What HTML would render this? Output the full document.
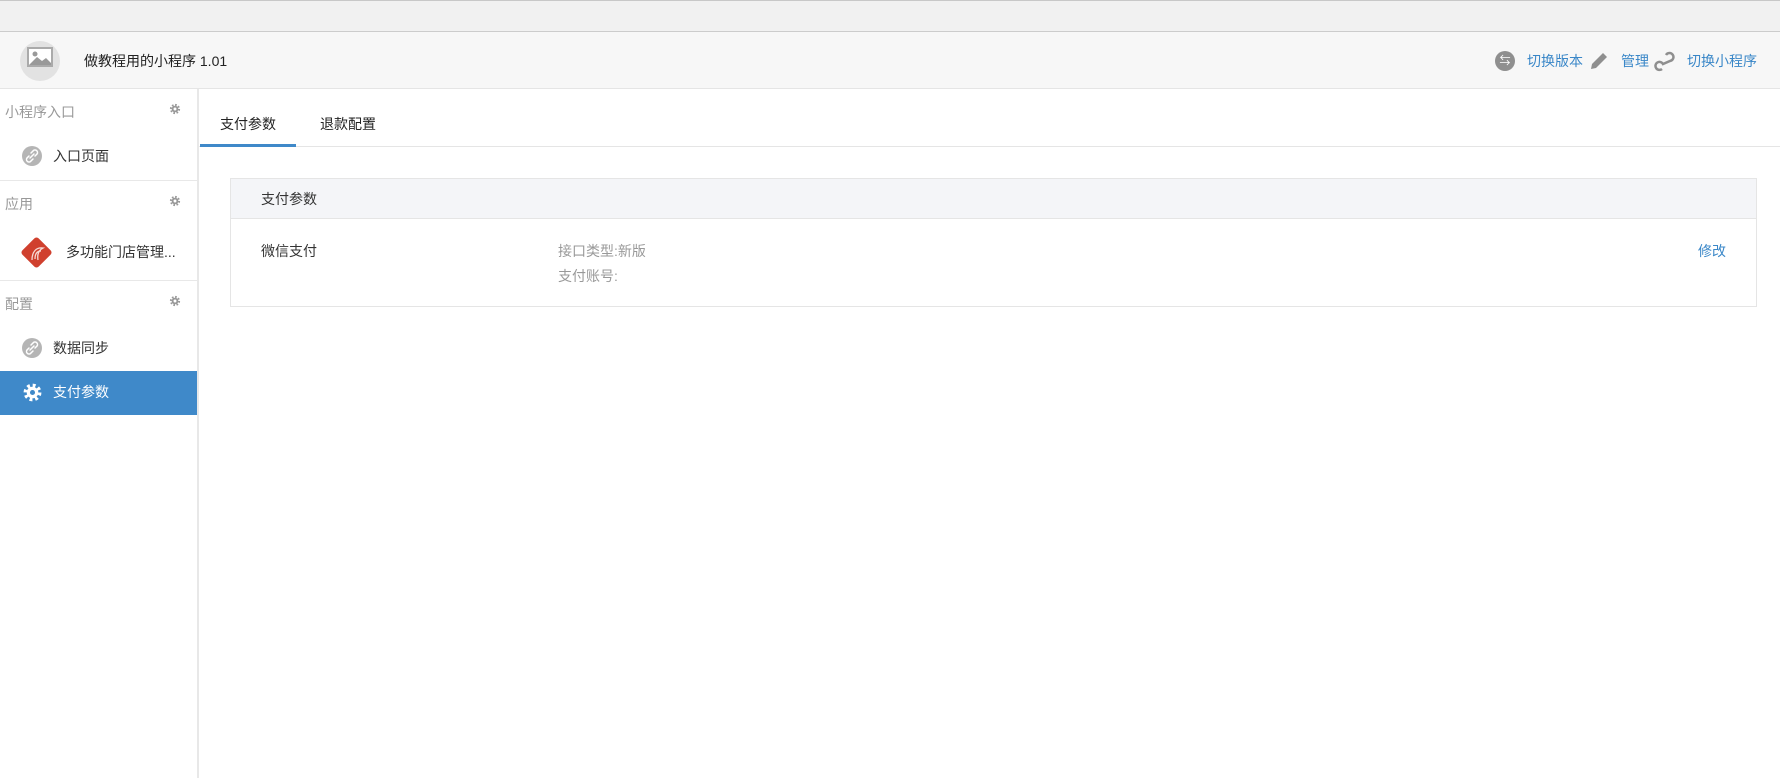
<!DOCTYPE html>
<html><head><meta charset="utf-8"><style>
*{margin:0;padding:0;box-sizing:border-box}
body{width:1780px;height:778px;overflow:hidden;background:#fff;font-family:"Liberation Sans","Noto Sans CJK SC",sans-serif;font-size:14px;color:#333;position:relative}
.a{position:absolute;white-space:nowrap;line-height:20px}
.blue{color:#3a87c8}
</style></head><body>
<svg width="0" height="0" style="position:absolute"><defs><g id="gear"><circle cx="10" cy="10" r="6.5" fill="none" stroke="currentColor" stroke-width="4" stroke-dasharray="2.6 2.5"/><circle cx="10" cy="10" r="5.5" fill="currentColor"/><circle cx="10" cy="10" r="2.4" fill="var(--bg)"/></g>
<g id="link"><circle cx="10" cy="10" r="10" fill="#b5b5b5"/><path d="M9 7 L11 5 A2.2 2.2 0 0 1 15 8 L13 10 M11 13 L9 15 A2.2 2.2 0 0 1 5 12 L7 10 M8 12 L12 8" fill="none" stroke="#fff" stroke-width="1.5" stroke-linecap="round"/></g></defs></svg>
<div class="a" style="left:0;top:0;width:1780px;height:32px;background:#f1f1f1;border-top:1px solid #c8c8c8;border-bottom:1px solid #ccc"></div>
<div class="a" style="left:0;top:32px;width:1780px;height:57px;background:#f7f7f7;border-bottom:1px solid #e5e5e5"></div>
<div class="a" style="left:20px;top:41px;width:40px;height:40px;border-radius:50%;background:#e2e2e2"></div>
<svg class="a" style="left:27px;top:47px" width="26" height="22" viewBox="0 0 26 22"><rect x="1" y="1" width="24" height="18" fill="#fff" stroke="#aaa" stroke-width="2"/><circle cx="8" cy="7" r="2.5" fill="#999"/><path d="M2 18 L10 10 L15 14 L19 11 L24 16 L24 18Z" fill="#999"/></svg>
<div class="a" style="left:84px;top:51px;color:#222">做教程用的小程序 1.01</div>
<div class="a" style="left:1495px;top:51px;width:20px;height:20px;border-radius:50%;background:#8f8f8f;color:#fff;font-size:11px;text-align:center;line-height:20px">⇆</div>
<div class="a blue" style="left:1527px;top:51px">切换版本</div>
<svg class="a" style="left:1588px;top:50px" width="22" height="22" viewBox="0 0 22 22"><path d="M3 19 L4 14 L15 3 L19 7 L8 18Z" fill="#8f8f8f"/></svg>
<div class="a blue" style="left:1621px;top:51px">管理</div>
<svg class="a" style="left:1654px;top:50px" width="22" height="22" viewBox="0 0 22 22"><path d="M12 5 A4 4 0 1 1 16 11 L9 14 A4 4 0 1 0 8 19" fill="none" stroke="#8f8f8f" stroke-width="2.5"/></svg>
<div class="a blue" style="left:1687px;top:51px">切换小程序</div>

<div class="a" style="left:197px;top:89px;width:2px;height:689px;background:#e8e8e8"></div>
<div class="a" style="left:5px;top:102px;color:#999">小程序入口</div>
<svg class="a" style="left:169px;top:103px;color:#999;--bg:#fff" width="12" height="12" viewBox="0 0 20 20"><use href="#gear"/></svg>
<svg class="a" style="left:22px;top:146px" width="20" height="20" viewBox="0 0 20 20"><use href="#link"/></svg>
<div class="a" style="left:53px;top:146px">入口页面</div>
<div class="a" style="left:0;top:180px;width:197px;height:1px;background:#e8e8e8"></div>
<div class="a" style="left:5px;top:194px;color:#999">应用</div>
<svg class="a" style="left:169px;top:195px;color:#999;--bg:#fff" width="12" height="12" viewBox="0 0 20 20"><use href="#gear"/></svg>
<div class="a" style="left:25px;top:241px;width:23px;height:23px;background:#d0402e;transform:rotate(45deg);border-radius:3px"></div>
<svg class="a" style="left:26px;top:242px" width="22" height="22" viewBox="0 0 22 22"><path d="M6 18 C6 10 10 5 17 6 C13 8 11 12 12 18 M9 17 C9 12 11 9 15 9" fill="none" stroke="#fff" stroke-width="1.3" opacity=".8"/></svg>
<div class="a" style="left:66px;top:242px">多功能门店管理...</div>
<div class="a" style="left:0;top:280px;width:197px;height:1px;background:#e8e8e8"></div>
<div class="a" style="left:5px;top:294px;color:#999">配置</div>
<svg class="a" style="left:169px;top:295px;color:#999;--bg:#fff" width="12" height="12" viewBox="0 0 20 20"><use href="#gear"/></svg>
<svg class="a" style="left:22px;top:338px" width="20" height="20" viewBox="0 0 20 20"><use href="#link"/></svg>
<div class="a" style="left:53px;top:338px">数据同步</div>
<div class="a" style="left:0;top:371px;width:197px;height:44px;background:#3f89c9"></div>
<svg class="a" style="left:22px;top:382px;color:#fff;--bg:#3f89c9" width="21" height="21" viewBox="0 0 20 20"><use href="#gear"/></svg>
<div class="a" style="left:53px;top:382px;color:#fff">支付参数</div>

<div class="a" style="left:199px;top:146px;width:1581px;height:1px;background:#e5e5e5"></div>
<div class="a" style="left:220px;top:114px;color:#222">支付参数</div>
<div class="a" style="left:200px;top:144px;width:96px;height:3px;background:#3f89c9"></div>
<div class="a" style="left:320px;top:114px;color:#222">退款配置</div>

<div class="a" style="left:230px;top:178px;width:1527px;height:129px;border:1px solid #e5e5e5"></div>
<div class="a" style="left:231px;top:179px;width:1525px;height:40px;background:#f4f5f8;border-bottom:1px solid #e5e5e5"></div>
<div class="a" style="left:261px;top:189px;color:#333">支付参数</div>
<div class="a" style="left:261px;top:241px;color:#333">微信支付</div>
<div class="a" style="left:558px;top:241px;color:#999">接口类型:新版</div>
<div class="a" style="left:558px;top:266px;color:#999">支付账号:</div>
<div class="a blue" style="left:1698px;top:241px">修改</div>
</body></html>
